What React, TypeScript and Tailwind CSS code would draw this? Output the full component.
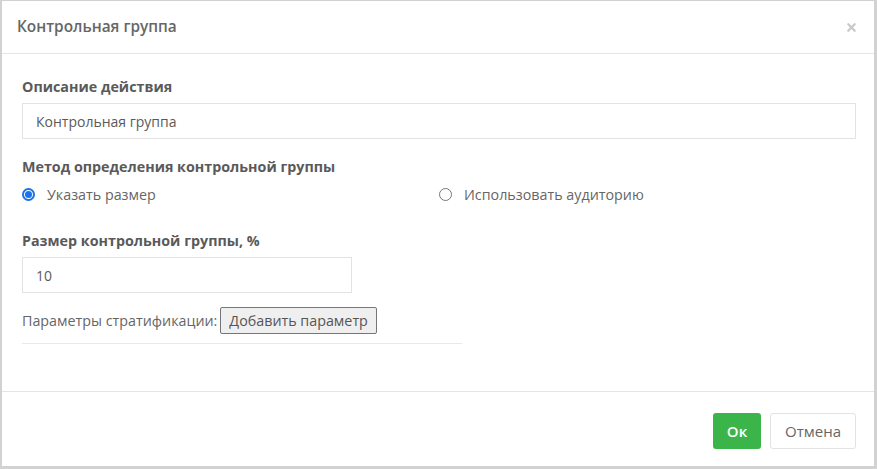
import { X } from 'lucide-react';

function Radio({ checked, label }: { checked?: boolean; label: string }) {
  return (
    <label className="flex items-center gap-[12px] text-[14.3px] text-[#666]">
      {checked ? (
        <span className="w-[13px] h-[13px] rounded-full border-[2px] border-[#1a73e8] flex items-center justify-center">
          <span className="w-[7px] h-[7px] rounded-full bg-[#1a73e8]" />
        </span>
      ) : (
        <span className="w-[13px] h-[13px] rounded-full border border-[#777]" />
      )}
      <span>{label}</span>
    </label>
  );
}

export default function App() {
  return (
    <div
      className="w-[877px] h-[469px] flex flex-col bg-white border-l-2 border-t border-r-[3px] border-b-[3px] border-[#d2d2d2] text-[#555]"
      style={{ fontFamily: '"Open Sans", sans-serif' }}
    >
      <div className="h-[53px] flex items-center justify-between pl-[15px] pr-[16px] border-b border-[#e5e5e5] shrink-0">
        <span className="text-[15.4px] font-semibold text-[#666]">Контрольная группа</span>
        <X size={13} strokeWidth={4} className="text-[#c8c8c8]" />
      </div>

      <div className="flex-1 pl-5 pr-[18px] pt-[24px]">
        <div className="text-[14.3px] font-bold leading-[18px] text-[#5a5a5a]">Описание действия</div>
        <div className="mt-[7px] h-[36px] border border-[#e3e3e3] flex items-center px-[13px] text-[14px] text-[#5a5a5a]">
          Контрольная группа
        </div>

        <div className="mt-[19px] text-[14.3px] font-bold leading-[18px] text-[#5a5a5a]">
          Метод определения контрольной группы
        </div>
        <div className="mt-[8px] grid grid-cols-2 h-[18px] items-center">
          <Radio checked label="Указать размер" />
          <Radio label="Использовать аудиторию" />
        </div>

        <div className="mt-[30px] text-[14.3px] font-bold leading-[18px] text-[#5a5a5a]">Размер контрольной группы, %</div>
        <div className="mt-[7px] w-[330px] h-[36px] border border-[#e3e3e3] flex items-center px-[13px] text-[14px] text-[#5a5a5a]">
          10
        </div>

        <div className="mt-[14px] w-[440px] border-b border-[#e8e8e8] pb-[9px] flex items-center gap-[3px] text-[14.3px] text-[#666]">
          <span>Параметры стратификации:</span>
          <button className="h-[27px] px-[8px] bg-[#efefef] border border-[#767676] rounded-[2px] text-[14.3px] text-[#555]">
            Добавить параметр
          </button>
        </div>
      </div>

      <div className="h-[75px] shrink-0 border-t border-[#e5e5e5] flex justify-end items-start gap-[9px] pt-[21px] pr-[18px]">
        <button className="w-[48px] h-[36px] rounded-[3px] bg-[#3bb54a] text-white text-[15px] font-semibold">Ок</button>
        <button className="w-[86px] h-[36px] rounded-[3px] bg-white border border-[#e3e3e3] text-[15px] text-[#666]">
          Отмена
        </button>
      </div>
    </div>
  );
}
